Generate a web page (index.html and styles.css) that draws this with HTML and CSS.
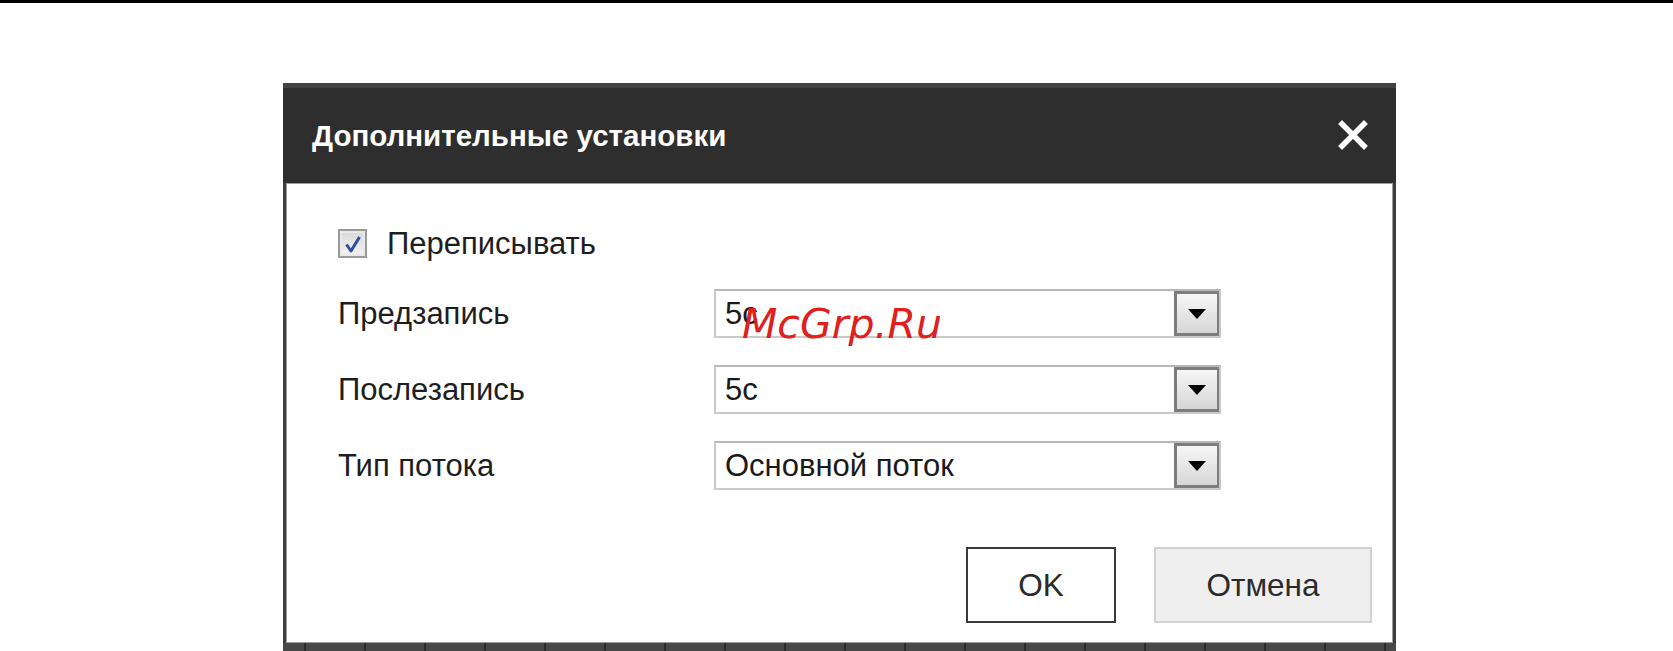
FILE: index.html
```html
<!DOCTYPE html>
<html lang="ru">
<head>
<meta charset="utf-8">
<title>Дополнительные установки</title>
<link rel="stylesheet" href="styles.css">
</head>
<body>
<div class="topbar"></div>
<div class="dialog">
  <div class="header">
    <span class="title">Дополнительные установки</span>
    <svg class="close" width="30" height="30" viewBox="0 0 30 30" aria-label="close">
      <path d="M4 4 L26 26 M26 4 L4 26" stroke="#ffffff" stroke-width="5.5" stroke-linecap="square" fill="none"/>
    </svg>
  </div>
  <div class="body">
    <label class="check-row">
      <span class="checkbox">
        <svg width="20" height="20" viewBox="0 0 20 20"><path d="M3.5 10.5 L8 17 L16.5 3" stroke="#2f4f9e" stroke-width="3" fill="none" stroke-linejoin="round"/></svg>
      </span>
      <span class="check-text">Переписывать</span>
    </label>
    <div class="form">
      <span class="label">Предзапись</span>
      <div class="select"><span class="value">5с</span><span class="arrow"><span class="tri"></span></span></div>
      <span class="label">Послезапись</span>
      <div class="select"><span class="value">5с</span><span class="arrow"><span class="tri"></span></span></div>
      <span class="label">Тип потока</span>
      <div class="select"><span class="value">Основной поток</span><span class="arrow"><span class="tri"></span></span></div>
    </div>
    <div class="buttons">
      <button class="btn btn-ok">OK</button>
      <button class="btn btn-cancel">Отмена</button>
    </div>
    <span class="watermark">McGrp.Ru</span>
  </div>
  <div class="bottom-strip"></div>
</div>
</body>
</html>
```
FILE: styles.css
```css
html, body {
  margin: 0;
  padding: 0;
  background: #ffffff;
  overflow: hidden;
}
body {
  width: 1673px;
  height: 651px;
  font-family: "Liberation Sans", Arial, sans-serif;
}
.topbar {
  height: 3px;
  background: #000000;
}
.dialog {
  margin-top: 80px;
  margin-left: 283px;
  width: 1113px;
  height: 568px;
  background: #3e3e3e;
  display: flex;
  flex-direction: column;
}
.header {
  box-sizing: border-box;
  height: 100px;
  background: #2e2e2e;
  border-top: 5px solid #424242;
  display: flex;
  align-items: center;
  justify-content: space-between;
  padding: 0 28px 0 29px;
}
.title {
  color: #ffffff;
  font-weight: bold;
  font-size: 29.5px;
  margin-top: 0;
}
.close {
  display: block;
  margin-top: -2px;
}
.body {
  position: relative;
  box-sizing: border-box;
  height: 460px;
  margin: 0 3px;
  background: #ffffff;
  border: 1px solid #9c9c9c;
  padding: 45px 20px 0 51px;
}
.check-row {
  display: flex;
  align-items: center;
  gap: 20px;
  height: 29px;
}
.checkbox {
  box-sizing: border-box;
  width: 29px;
  height: 29px;
  border: 2px solid #9a9a9a;
  background: linear-gradient(#d8d8d8, #f2f2f2);
  display: flex;
  align-items: center;
  justify-content: center;
  box-shadow: inset 0 0 0 2px #e9e9e9;
}
.check-text, .label {
  font-size: 31px;
  color: #1e1e1e;
}
.form {
  margin-top: 31px;
  display: grid;
  grid-template-columns: 376px 507px;
  row-gap: 27px;
  align-items: center;
}
.select {
  box-sizing: border-box;
  height: 49px;
  border: 2px solid #c9c9c9;
  border-top-color: #b8b8b8;
  display: flex;
  align-items: stretch;
  background: #ffffff;
}
.value {
  flex: 1;
  font-size: 31px;
  color: #1a1a1a;
  padding-left: 9px;
  display: flex;
  align-items: center;
}
.arrow {
  box-sizing: border-box;
  width: 45px;
  border: 3px solid #7d7d7d;
  border-right-width: 2px;
  background: linear-gradient(#f6f6f6, #d6d6d6);
  display: flex;
  align-items: center;
  justify-content: center;
}
.tri {
  width: 0;
  height: 0;
  border-left: 9px solid transparent;
  border-right: 9px solid transparent;
  border-top: 10px solid #000000;
}
.buttons {
  margin-top: 57px;
  display: flex;
  justify-content: flex-end;
  gap: 38px;
}
.btn {
  box-sizing: border-box;
  height: 76px;
  font-family: "Liberation Sans", Arial, sans-serif;
  font-size: 31.5px;
  color: #2a2a2a;
  padding: 0;
}
.btn-ok {
  width: 150px;
  background: #ffffff;
  border: 2px solid #3a3a3a;
}
.btn-cancel {
  width: 218px;
  background: #efefef;
  border: 2px solid #d2d2d2;
}
.watermark {
  position: absolute;
  left: 455px;
  top: 120px;
  font-family: "DejaVu Sans", sans-serif;
  font-style: italic;
  font-size: 41px;
  color: #e0201c;
  line-height: 1;
}
.bottom-strip {
  height: 8px;
  background: repeating-linear-gradient(90deg, #2c2c2c 0 2px, #474747 2px 60px);
  background-position: 21px 0;
}
```
